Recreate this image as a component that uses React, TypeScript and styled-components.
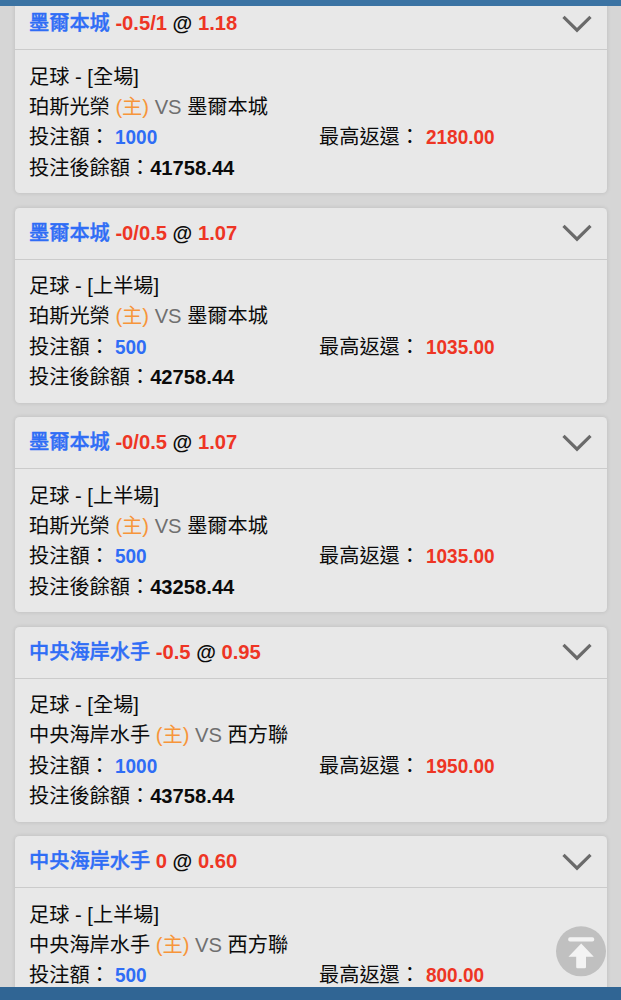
import React from "react";
import styled, { createGlobalStyle } from "styled-components";

const GlobalStyle = createGlobalStyle`
  * { box-sizing: border-box; }
  body {
    margin: 0;
    background: #d6d6d6;
    font-family: "Liberation Sans", "Noto Sans CJK TC", sans-serif;
    font-size: 20.2px;
    color: #0b0b0b;
  }
`;

const Screen = styled.div`
  position: relative;
  display: flex;
  flex-direction: column;
  width: 621px;
  height: 1000px;
  overflow: hidden;
  background: #d6d6d6;
`;

const TopBar = styled.header`
  flex: 0 0 6px;
  background: #3b73a3;
`;

const BottomBar = styled.footer`
  flex: 0 0 13px;
  background: #306594;
`;

const Viewport = styled.main`
  flex: 1 1 0;
  min-height: 0;
  overflow: hidden;
`;

const BetList = styled.div`
  display: flex;
  flex-direction: column;
  gap: 14.5px;
  margin-top: -7.9px;
  padding: 0 14.5px;
`;

const Card = styled.article`
  flex: none;
  height: 195px;
  border-radius: 4.5px;
  background: #e8e8e8;
  box-shadow: 0 0 4px rgba(0, 0, 0, 0.13);
`;

const CardHeader = styled.div`
  display: flex;
  align-items: center;
  justify-content: space-between;
  height: 52px;
  padding: 0 14.5px;
  border-bottom: 1.5px solid #cbcbcb;
`;

const Title = styled.div`
  font-weight: 700;
  line-height: 30px;
  margin-top: -1px;
  white-space: pre;
`;

const Team = styled.span`
  font-weight: 500;
  -webkit-text-stroke: 0.4px #2f6df6;
  color: #2f6df6;
`;

const Odds = styled.span`
  color: #ee3524;
`;

const CardBody = styled.div`
  padding: 11.5px 15px 0 14.5px;
`;

const Line = styled.div`
  display: flex;
  height: 30.3px;
  line-height: 30.3px;
  white-space: pre;
`;

const Cell = styled.div`
  flex: 0 0 290px;
`;

const Home = styled.span`
  color: #f7953a;
`;

const Versus = styled.span`
  color: #6f6f6f;
`;

const Amount = styled.b<{ $color: string }>`
  display: inline-block;
  transform: scaleX(0.94);
  transform-origin: left center;
  color: ${(p) => p.$color};
`;

const Balance = styled.b`
  color: #0b0b0b;
`;

const Chevron = styled.svg`
  display: block;
  width: 30px;
  height: 18px;
`;

const ToTop = styled.button`
  position: absolute;
  left: 556px;
  top: 926px;
  width: 50px;
  height: 51px;
  padding: 0;
  border: 0;
  background: none;
`;

interface Bet {
  team: string;
  handicap: string;
  odds: string;
  period: string;
  home: string;
  away: string;
  stake: string;
  payout: string;
  balance: string;
}

const bets: Bet[] = [
  { team: "墨爾本城", handicap: "-0.5/1", odds: "1.18", period: "全場", home: "珀斯光榮", away: "墨爾本城", stake: "1000", payout: "2180.00", balance: "41758.44" },
  { team: "墨爾本城", handicap: "-0/0.5", odds: "1.07", period: "上半場", home: "珀斯光榮", away: "墨爾本城", stake: "500", payout: "1035.00", balance: "42758.44" },
  { team: "墨爾本城", handicap: "-0/0.5", odds: "1.07", period: "上半場", home: "珀斯光榮", away: "墨爾本城", stake: "500", payout: "1035.00", balance: "43258.44" },
  { team: "中央海岸水手", handicap: "-0.5", odds: "0.95", period: "全場", home: "中央海岸水手", away: "西方聯", stake: "1000", payout: "1950.00", balance: "43758.44" },
  { team: "中央海岸水手", handicap: "0", odds: "0.60", period: "上半場", home: "中央海岸水手", away: "西方聯", stake: "500", payout: "800.00", balance: "" },
];

function BetCard({ bet }: { bet: Bet }) {
  return (
    <Card>
      <CardHeader>
        <Title>
          <Team>{bet.team}</Team> <Odds>{bet.handicap}</Odds> @ <Odds>{bet.odds}</Odds>
        </Title>
        <Chevron viewBox="0 0 30 18" fill="none">
          <path d="M1.5 1.8 15 15.2 28.5 1.8" stroke="#6a6a6a" strokeWidth="3.2" />
        </Chevron>
      </CardHeader>
      <CardBody>
        <Line>足球 - [{bet.period}]</Line>
        <Line>
          <span>
            {bet.home} <Home>(主)</Home> <Versus>VS</Versus> {bet.away}
          </span>
        </Line>
        <Line>
          <Cell>
            投注額： <Amount $color="#2f6df6">{bet.stake}</Amount>
          </Cell>
          <Cell>
            最高返還： <Amount $color="#ee3524">{bet.payout}</Amount>
          </Cell>
        </Line>
        {bet.balance && (
          <Line>
            投注後餘額：<Balance>{bet.balance}</Balance>
          </Line>
        )}
      </CardBody>
    </Card>
  );
}

export default function App() {
  return (
    <Screen>
      <GlobalStyle />
      <TopBar />
      <Viewport>
        <BetList>
          {bets.map((bet, i) => (
            <BetCard key={i} bet={bet} />
          ))}
        </BetList>
      </Viewport>
      <BottomBar />
      <ToTop aria-label="top">
        <svg width="50" height="51" viewBox="0 0 50 51">
          <circle cx="25" cy="25.3" r="25" fill="#c0c0c0" />
          <rect x="12.2" y="11.2" width="26" height="4.4" rx="1.8" fill="#f3f3f3" />
          <path d="M25.2 17.5 37.8 30.8H30V41q0 1.2-1.2 1.2h-7.4q-1.2 0-1.2-1.2V30.8H12.5Z" fill="#f3f3f3" />
        </svg>
      </ToTop>
    </Screen>
  );
}
